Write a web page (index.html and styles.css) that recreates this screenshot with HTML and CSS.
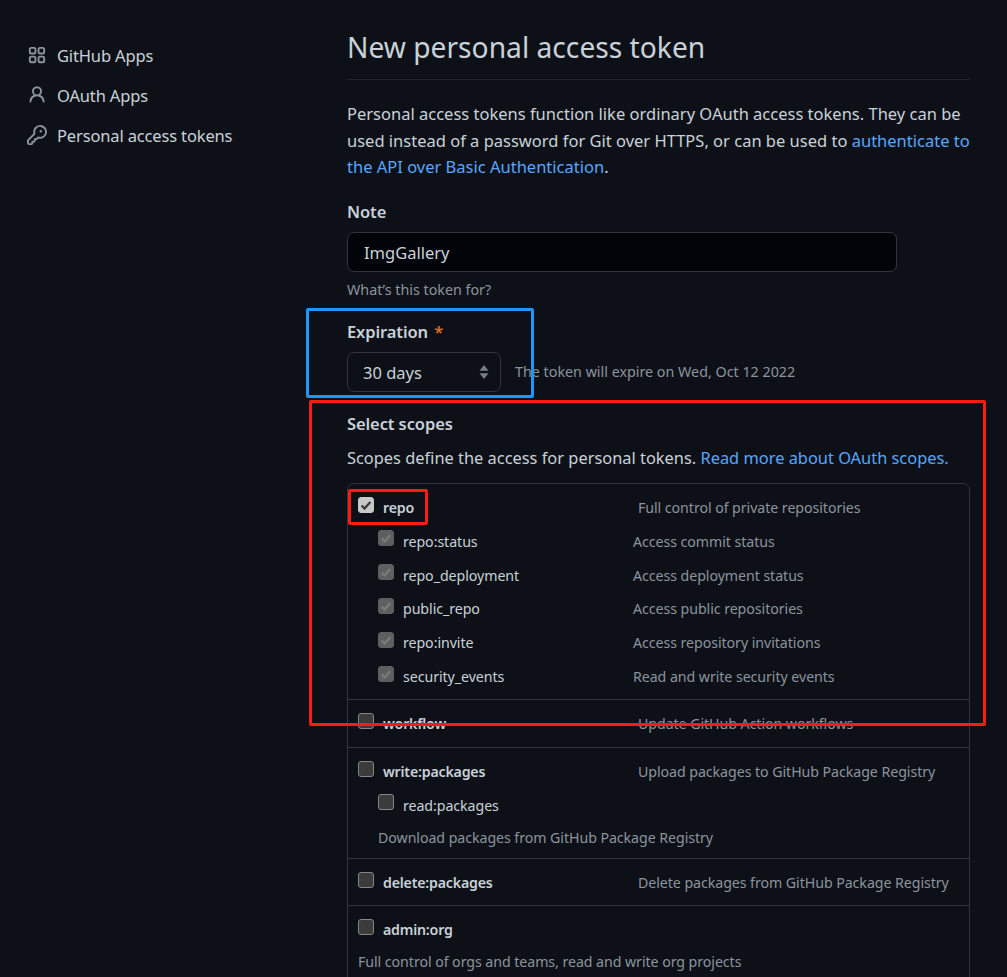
FILE: index.html
```html
<!DOCTYPE html>
<html lang="en">
<head>
<meta charset="utf-8">
<title>New personal access token</title>
<link rel="stylesheet" href="styles.css">
</head>
<body>
<div class="page">
  <nav class="side">
    <a class="side-item"><svg class="side-icon" viewBox="0 0 16 16"><path fill-rule="evenodd" d="M1.5 3.25c0-.966.784-1.75 1.75-1.75h2.5c.966 0 1.75.784 1.75 1.75v2.5A1.75 1.75 0 015.75 7.5h-2.5A1.75 1.75 0 011.5 5.75v-2.5zM3.25 3a.25.25 0 00-.25.25v2.5c0 .138.112.25.25.25h2.5A.25.25 0 006 5.75v-2.5A.25.25 0 005.75 3h-2.5zM1.5 10.25c0-.966.784-1.75 1.75-1.75h2.5c.966 0 1.75.784 1.75 1.75v2.5a1.75 1.75 0 01-1.75 1.75h-2.5a1.75 1.75 0 01-1.75-1.75v-2.5zM3.25 10a.25.25 0 00-.25.25v2.5c0 .138.112.25.25.25h2.5a.25.25 0 00.25-.25v-2.5a.25.25 0 00-.25-.25h-2.5zM8.5 3.25c0-.966.784-1.75 1.75-1.75h2.5c.966 0 1.75.784 1.75 1.75v2.5a1.75 1.75 0 01-1.75 1.75h-2.5A1.75 1.75 0 018.5 5.75v-2.5zM10.25 3a.25.25 0 00-.25.25v2.5c0 .138.112.25.25.25h2.5a.25.25 0 00.25-.25v-2.5a.25.25 0 00-.25-.25h-2.5zM8.5 10.25c0-.966.784-1.75 1.75-1.75h2.5c.966 0 1.75.784 1.75 1.75v2.5a1.75 1.75 0 01-1.75 1.75h-2.5a1.75 1.75 0 01-1.75-1.75v-2.5zM10.25 10a.25.25 0 00-.25.25v2.5c0 .138.112.25.25.25h2.5a.25.25 0 00.25-.25v-2.5a.25.25 0 00-.25-.25h-2.5z"/></svg>GitHub Apps</a>
    <a class="side-item"><svg class="side-icon" viewBox="0 0 16 16"><path fill-rule="evenodd" d="M10.5 5a2.5 2.5 0 11-5 0 2.5 2.5 0 015 0zm.061 3.073a4 4 0 10-5.123 0 6.004 6.004 0 00-3.431 5.142.75.75 0 001.498.07 4.5 4.5 0 018.99 0 .75.75 0 101.498-.07 6.005 6.005 0 00-3.432-5.142z"/></svg>OAuth Apps</a>
    <a class="side-item"><svg class="side-icon" viewBox="0 0 16 16"><path fill-rule="evenodd" d="M6.5 5.5a4 4 0 112.731 3.795.75.75 0 00-.768.18L7.44 10.5H6.25a.75.75 0 00-.75.75v1.19l-.06.06H4.25a.75.75 0 00-.75.75v1.19l-.06.06H1.75a.25.25 0 01-.25-.25v-1.69l5.024-5.023a.75.75 0 00.181-.768A3.995 3.995 0 016.5 5.5zm4-5.5a5.5 5.5 0 00-5.348 6.788L.22 11.72a.75.75 0 00-.22.53v2C0 15.216.784 16 1.75 16h2a.75.75 0 00.53-.22l.5-.5a.75.75 0 00.22-.53V14h.75a.75.75 0 00.53-.22l.5-.5a.75.75 0 00.22-.53V12h.75a.75.75 0 00.53-.22l.932-.932A5.5 5.5 0 1010.5 0zm.5 6a1 1 0 100-2 1 1 0 000 2z"/></svg>Personal access tokens</a>
  </nav>
  <main class="main">
    <h1 class="title">New personal access token</h1>
    <p class="intro">Personal access tokens function like ordinary OAuth access tokens. They can be used instead of a password for Git over HTTPS, or can be used to <a class="link">authenticate to the API over Basic Authentication</a>.</p>
    <div class="label note-label">Note</div>
    <div class="input">ImgGallery</div>
    <div class="hint note-hint">What’s this token for?</div>
    <div class="label exp-label">Expiration <span class="req">*</span></div>
    <div class="exp-row">
      <div class="select">30 days
        <svg class="updown" viewBox="0 0 10 14"><path d="M5 0 9.5 5.8H.5zM5 14 .5 8.2h9z"/></svg>
      </div>
      <span class="hint">The token will expire on Wed, Oct 12 2022</span>
    </div>
    <div class="label scope-label">Select scopes</div>
    <p class="scope-intro">Scopes define the access for personal tokens. <a class="link">Read more about OAuth scopes.</a></p>
    <div class="scopes">
      <div class="group g-repo">
        <div class="row parent"><span class="cb on"><svg viewBox="0 0 16 16"><path d="M3 8.5 6.3 12 13 4.5" /></svg></span><b class="name">repo</b><span class="desc">Full control of private repositories</span></div>
        <div class="row child"><span class="cb dis"><svg viewBox="0 0 16 16"><path d="M3 8.5 6.3 12 13 4.5" /></svg></span><span class="name">repo:status</span><span class="desc">Access commit status</span></div>
        <div class="row child"><span class="cb dis"><svg viewBox="0 0 16 16"><path d="M3 8.5 6.3 12 13 4.5" /></svg></span><span class="name">repo_deployment</span><span class="desc">Access deployment status</span></div>
        <div class="row child"><span class="cb dis"><svg viewBox="0 0 16 16"><path d="M3 8.5 6.3 12 13 4.5" /></svg></span><span class="name">public_repo</span><span class="desc">Access public repositories</span></div>
        <div class="row child"><span class="cb dis"><svg viewBox="0 0 16 16"><path d="M3 8.5 6.3 12 13 4.5" /></svg></span><span class="name">repo:invite</span><span class="desc">Access repository invitations</span></div>
        <div class="row child"><span class="cb dis"><svg viewBox="0 0 16 16"><path d="M3 8.5 6.3 12 13 4.5" /></svg></span><span class="name">security_events</span><span class="desc">Read and write security events</span></div>
      </div>
      <div class="group g-single">
        <div class="row parent"><span class="cb"></span><b class="name">workflow</b><span class="desc">Update GitHub Action workflows</span></div>
      </div>
      <div class="group g-write">
        <div class="row parent"><span class="cb"></span><b class="name">write:packages</b><span class="desc">Upload packages to GitHub Package Registry</span></div>
        <div class="row child"><span class="cb"></span><span class="name">read:packages</span></div>
        <div class="sub-note">Download packages from GitHub Package Registry</div>
      </div>
      <div class="group g-delete">
        <div class="row parent"><span class="cb"></span><b class="name">delete:packages</b><span class="desc">Delete packages from GitHub Package Registry</span></div>
      </div>
      <div class="group g-admin">
        <div class="row parent"><span class="cb"></span><b class="name">admin:org</b></div>
        <div class="org-note">Full control of orgs and teams, read and write org projects</div>
      </div>
    </div>
  </main>
  <div class="mark mark-blue"></div>
  <div class="mark mark-red"></div>
  <div class="mark mark-small"></div>
</div>
</body>
</html>
```

FILE: styles.css
```css
* { box-sizing: border-box; }
html, body { margin: 0; height: 977px; overflow: hidden; background: #0d1117; }
body { font-family: "Noto Sans", "Open Sans", sans-serif; color: #c9d1d9; }
.page { position: relative; display: flex; height: 977px; overflow: hidden; }

.side { width: 347px; flex: none; padding: 35px 0 0 27px; }
.side-item { display: flex; align-items: center; gap: 10px; height: 40px; font-size: 16.5px; letter-spacing: -0.15px; color: #c9d1d9; }
.side-icon { width: 20px; height: 20px; fill: #8b949e; flex: none; }

.main { width: 623px; flex: none; }
.title { margin: 0; height: 80px; padding-top: 25px; font-size: 28.2px; line-height: 44px; font-weight: 400; border-bottom: 1px solid #21262d; }
.intro { margin: 21px 0 0; font-size: 16.5px; line-height: 26.5px; }
.link { color: #58a6ff; }
.label { font-size: 16.5px; line-height: 24px; font-weight: 600; letter-spacing: -0.1px; }
.note-label { margin-top: 19px; }
.input { margin-top: 8px; width: 550px; height: 40px; padding: 0 16px; font-size: 16.5px; line-height: 40px; background: #010409; border: 1px solid #30363d; border-radius: 7px; }
.hint { font-size: 14.3px; color: #8b949e; }
.note-hint { margin-top: 7px; line-height: 22px; }
.exp-label { margin-top: 19px; }
.req { color: #db6d28; margin-left: 2px; }
.exp-row { display: flex; align-items: center; gap: 14px; margin-top: 8px; }
.exp-row .hint { margin-top: -1px; }
.select { position: relative; width: 154px; height: 40px; padding: 0 15px; font-size: 16.5px; line-height: 40px; border: 1px solid #30363d; border-radius: 7px; }
.updown { position: absolute; right: 11px; top: 12px; width: 10px; height: 14px; fill: #767c85; }
.scope-label { margin-top: 20px; }
.scope-intro { margin: 9px 0 0; font-size: 16.4px; line-height: 26px; white-space: nowrap; }
.scopes { margin-top: 12px; height: 520px; border: 1px solid #30363d; border-radius: 7px; }
.group { border-top: 1px solid #30363d; padding: 0 10px; }
.group:first-child { border-top: 0; }
.g-repo { height: 215px; padding-top: 7px; }
.g-single { height: 48px; padding-top: 7px; }
.g-write { height: 111px; padding-top: 7px; }
.g-delete { height: 47px; padding-top: 7px; }
.g-admin { padding-top: 7px; }
.row { display: flex; align-items: center; font-size: 14.2px; letter-spacing: -0.06px; }
.parent { height: 34px; }
.child { height: 33.8px; padding-left: 20px; }
.cb { flex: none; width: 16px; height: 16px; margin-top: -6px; background: #3b3b3b; border: 1px solid #858585; border-radius: 3px; }
.cb svg { display: block; width: 14px; height: 14px; fill: none; stroke-width: 2.6; }
.cb.on { background: #c8c8c8; border-color: #c8c8c8; }
.cb.on svg { stroke: #3b3b3b; }
.cb.dis { background: #5f5f5f; border-color: #5f5f5f; }
.cb.dis svg { stroke: #7b7b7b; }
.name { margin-left: 9px; width: 255px; flex: none; }
b.name { font-weight: 600; letter-spacing: -0.2px; }
.child .name { width: 230px; }
.desc { color: #8b949e; white-space: nowrap; }
.sub-note { padding-left: 20px; margin-top: -1px; font-size: 14.2px; letter-spacing: -0.06px; line-height: 33px; color: #8b949e; }
.org-note { font-size: 14.2px; letter-spacing: -0.06px; line-height: 30px; color: #8b949e; }

.mark { position: absolute; border-radius: 2px; pointer-events: none; }
.mark-blue { left: 306px; top: 308px; width: 228px; height: 90px; border: 3px solid #1e96ff; }
.mark-red { left: 309px; top: 400px; width: 677px; height: 326px; border: 3px solid #ff1a12; }
.mark-small { left: 348px; top: 489px; width: 80px; height: 36px; border: 3px solid #ff1a12; }
```
